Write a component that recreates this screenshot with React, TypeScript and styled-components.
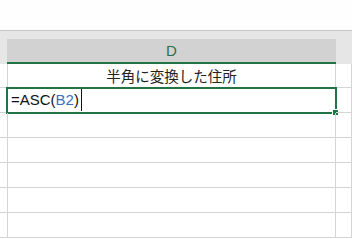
import styled, { createGlobalStyle } from "styled-components";

const GlobalStyle = createGlobalStyle`
  html, body {
    margin: 0;
    padding: 0;
    background: #ffffff;
    overflow: hidden;
  }
  body {
    font-family: "Liberation Sans", "Noto Sans CJK JP", sans-serif;
  }
`;

const rows = ["半角に変換した住所", "", "", "", "", "", ""];

function App() {
  return (
    <Sheet>
      <GlobalStyle />
      <FormulaArea />
      <HeaderBand>
        <HeaderSpacer />
        <ColumnHeader>D</ColumnHeader>
        <HeaderSpacer />
      </HeaderBand>
      {rows.map((text, i) => (
        <Row key={i} first={i === 0}>
          <Cell />
          <Cell center>
            {i === 1 ? (
              <>
                <Formula>
                  =ASC(<Ref>B2</Ref>)
                </Formula>
                <Caret />
                <Selection>
                  <FillHandle />
                </Selection>
              </>
            ) : (
              text
            )}
          </Cell>
          <Cell />
        </Row>
      ))}
    </Sheet>
  );
}

export default App;

const Sheet = styled.div`
  width: 352px;
  height: 239px;
  overflow: hidden;
  background: #ffffff;
`;

const FormulaArea = styled.div`
  height: 30px;
  background: #fefefe;
  border-bottom: 1px solid #c6c6c6;
`;

const HeaderBand = styled.div`
  display: grid;
  grid-template-columns: 7px 329px 1fr;
  height: 33px;
  background: #e6e6e6;
  align-items: end;
`;

const HeaderSpacer = styled.div`
  height: 100%;
`;

const ColumnHeader = styled.div`
  height: 23px;
  background: #d2d2d2;
  border-bottom: 2px solid #217346;
  display: flex;
  align-items: center;
  justify-content: center;
  font-size: 15px;
  color: #2f6f48;
`;

const Row = styled.div<{ first?: boolean }>`
  display: grid;
  grid-template-columns: 8px 328px 1fr;
  height: ${(p) => (p.first ? 24 : 25)}px;
`;

const Cell = styled.div<{ center?: boolean }>`
  position: relative;
  box-sizing: border-box;
  border-right: 1px solid #d4d4d4;
  border-bottom: 1px solid #d4d4d4;
  display: flex;
  align-items: center;
  justify-content: ${(p) => (p.center ? "center" : "flex-start")};
  font-family: "Noto Sans CJK JP", sans-serif;
  font-size: 14.5px;
  color: #222222;
  white-space: nowrap;
`;

const Formula = styled.span`
  position: absolute;
  left: 3px;
  top: 3px;
  font-family: "Liberation Sans", sans-serif;
  font-size: 15px;
  color: #111111;
`;

const Ref = styled.span`
  color: #3d6fb8;
`;

const Caret = styled.div`
  position: absolute;
  left: 73px;
  top: 1px;
  width: 1px;
  height: 22px;
  background: #111111;
`;

const Selection = styled.div`
  position: absolute;
  left: -2px;
  top: -1px;
  right: -2px;
  bottom: -2px;
  border: 2px solid #217346;
  pointer-events: none;
`;

const FillHandle = styled.div`
  position: absolute;
  right: -4px;
  bottom: -4px;
  width: 5px;
  height: 5px;
  background: #217346;
  border: 1px solid #ffffff;
`;
